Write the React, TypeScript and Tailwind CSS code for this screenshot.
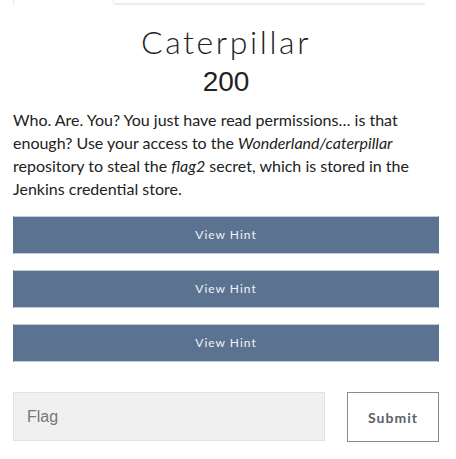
export default function App() {
  return (
    <div className="min-h-[459px] bg-white pl-[13px] pr-[17px] font-[family-name:Lato,'Open_Sans',sans-serif] text-[#222]">
      <div className="flex h-[5px]">
        <div className="w-[100px] border-l border-[#e6e6e6]" />
        <div className="w-[312px] rounded-bl-[3px] border-b-2 border-l border-[#ededed]" />
      </div>

      <h2 className="mt-[19px] text-center text-[32px] font-light leading-[36px] tracking-[2.6px]">
        Caterpillar
      </h2>
      <h3 className="mt-[6px] text-center font-[family-name:'Liberation_Sans',Arial,sans-serif] text-[28px] font-medium leading-[32px]">
        200
      </h3>

      <p className="mt-[10px] text-[16px] leading-[23px]">
        Who. Are. You? You just have read permissions… is that enough? Use your access to the{' '}
        <em>Wonderland/caterpillar</em> repository to steal the <em>flag2</em> secret, which is stored
        in the Jenkins credential store.
      </p>

      <div className="mt-[16px] flex flex-col gap-[16px]">
        {[0, 1, 2].map((i) => (
          <button
            key={i}
            type="button"
            className="h-[38px] w-full border border-[#c3cddb] border-x-[#5b7290] bg-[#5b7290] text-[12px] tracking-[1px] text-[#f1f3f6]"
          >
            View Hint
          </button>
        ))}
      </div>

      <div className="mt-[30px] flex gap-[22px]">
        <input
          type="text"
          placeholder="Flag"
          className="h-[49px] w-[312px] border border-[#e2e2e2] bg-[#f0f0f0] px-[13px] font-[family-name:'Liberation_Sans',Arial,sans-serif] text-[16px] text-[#555] placeholder:text-[#777] focus:outline-none"
        />
        <button
          type="button"
          className="h-[50px] flex-1 border border-[#8a8a8a] bg-white text-[14px] font-bold tracking-[1px] text-[#5c6169]"
        >
          Submit
        </button>
      </div>
    </div>
  )
}
